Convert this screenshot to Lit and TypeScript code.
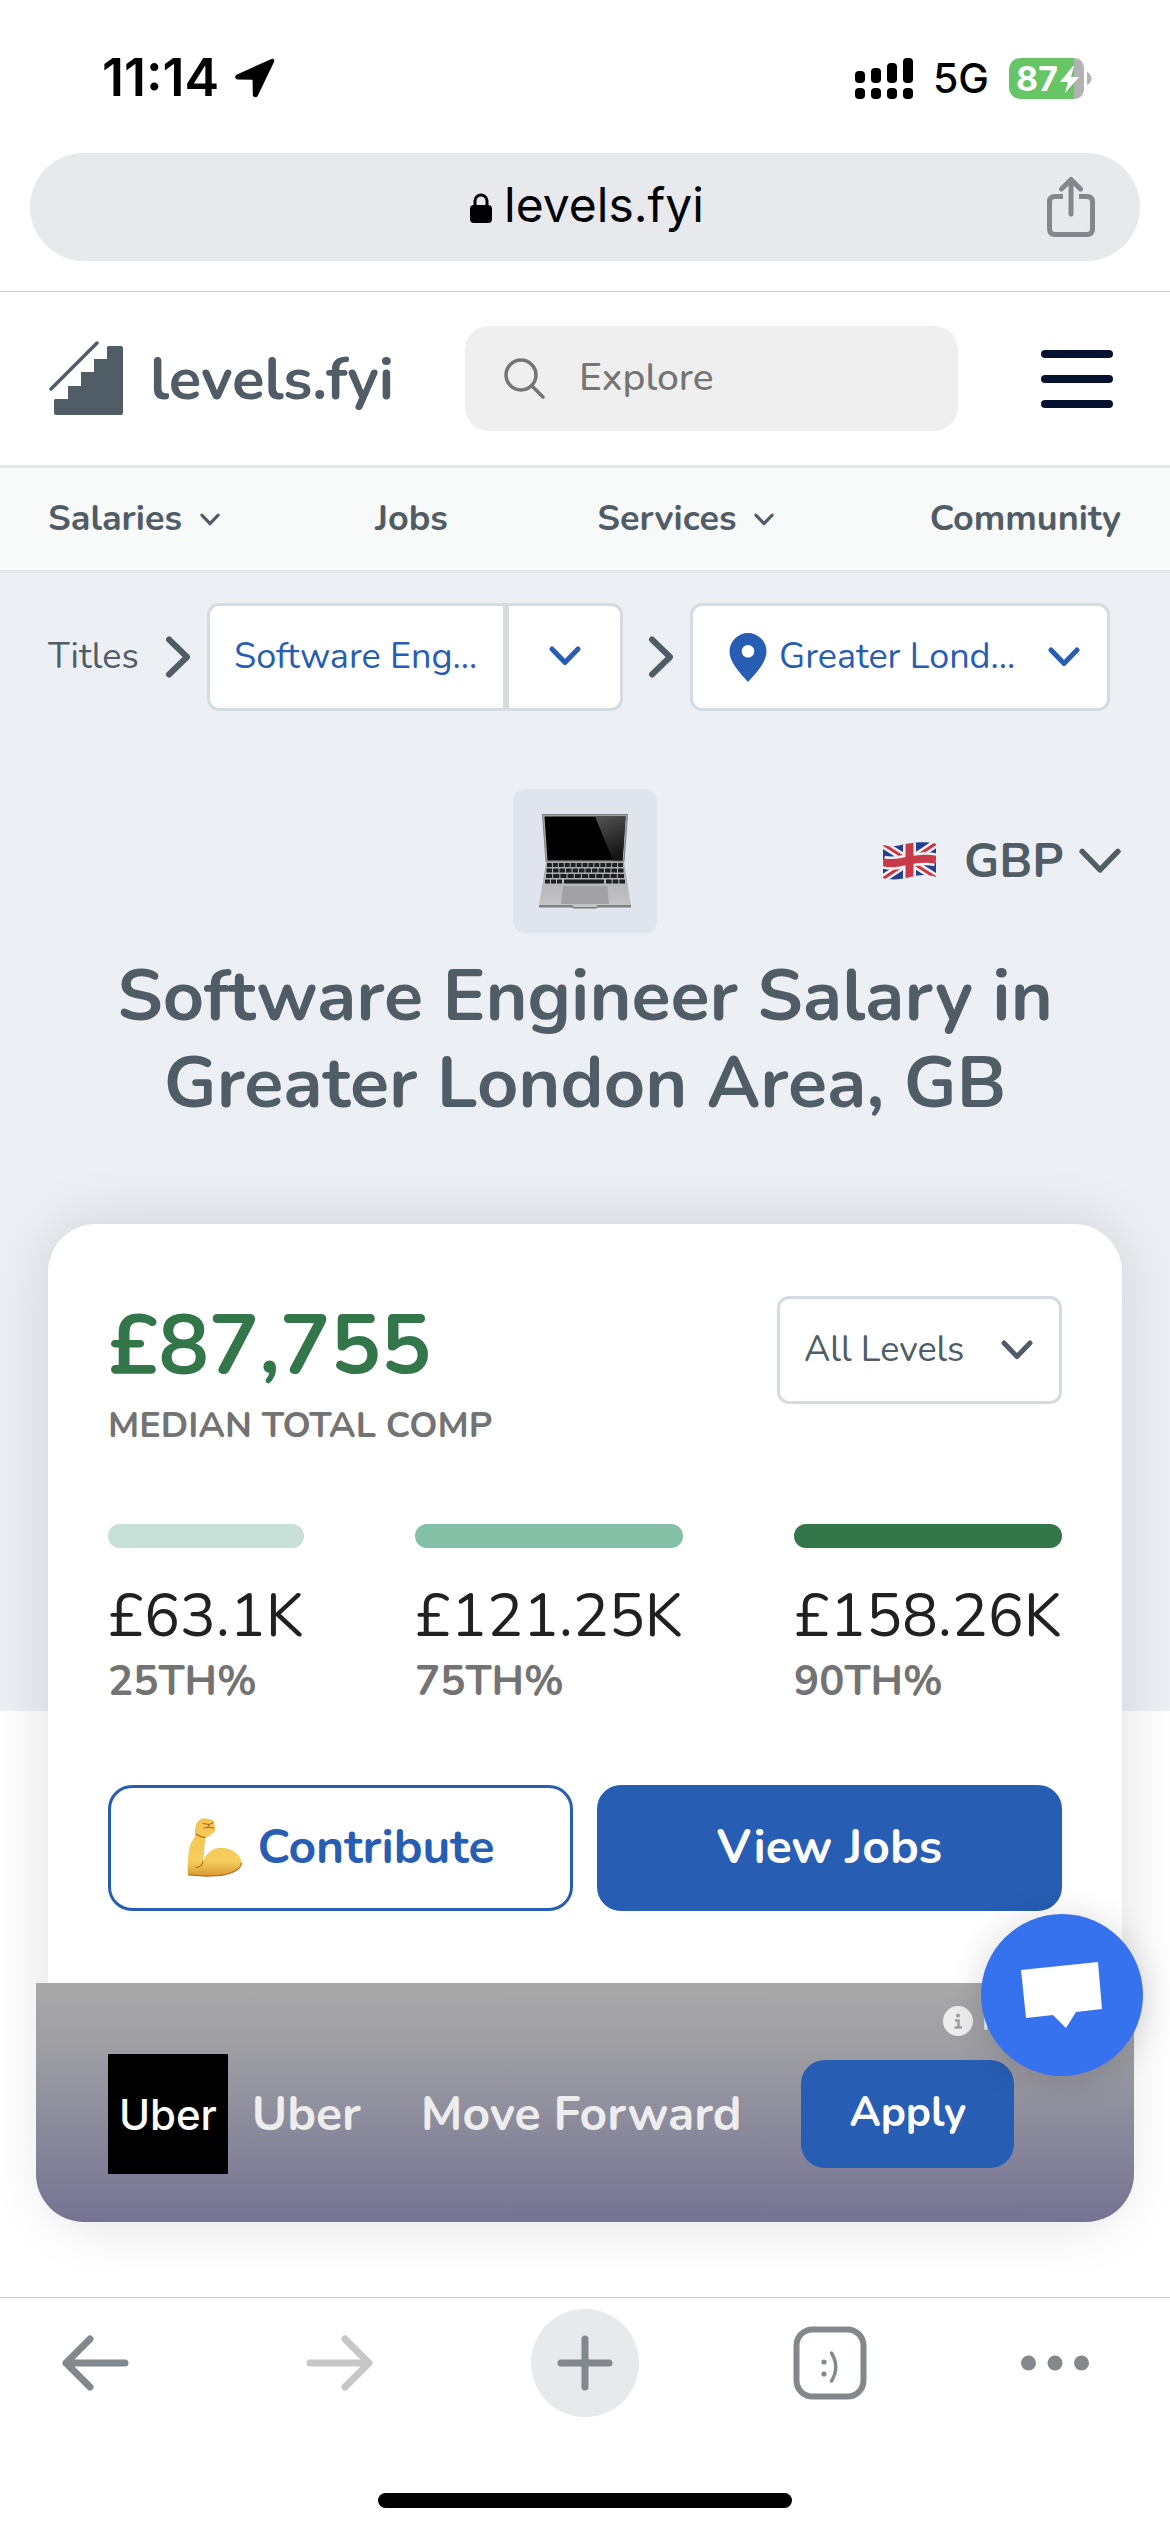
import { LitElement, html, css, svg } from "lit";
import { customElement } from "lit/decorators.js";

const chevronDown = (width: number, height: number, stroke: number) => svg`
  <svg class="chevron" width=${width} height=${height} viewBox="0 0 32 20" fill="none" stroke="currentColor"
    stroke-width=${stroke} stroke-linecap="round" stroke-linejoin="round" aria-hidden="true">
    <path d="M3 3 16 16.500 29 3" />
  </svg>`;

const chevronRight = svg`
  <svg width="26" height="42" viewBox="0 0 26 42" fill="none" stroke="currentColor" stroke-width="6"
    stroke-linecap="round" stroke-linejoin="round" aria-hidden="true">
    <path d="M4 3.500 22 21 4 38.500" />
  </svg>`;

/* ---------- Phone status bar ---------- */
@customElement("status-bar")
export class StatusBar extends LitElement {
  static styles = css`
    :host {
      display: flex;
      justify-content: space-between;
      align-items: center;
      height: 76px;
      padding: 40px 78px 37px 102px;
      font-family: Inter, "Liberation Sans", sans-serif;
      color: #000;
    }
    .side {
      display: flex;
      align-items: center;
      gap: 16px;
    }
    .right {
      gap: 20px;
    }
    .time {
      font-size: 52px;
      line-height: 60px;
      font-weight: 600;
    }
    .network {
      font-size: 41px;
      line-height: 60px;
      font-weight: 500;
    }
    .battery {
      font: 700 34px Inter, "Liberation Sans", sans-serif;
    }
    svg {
      display: block;
    }
  `;
  render() {
    return html`
      <div class="side">
        <span class="time">11:14</span>
        <svg width="40" height="40" viewBox="0 0 40 40" aria-label="Location in use">
          <path d="M36.500 1 2 16.500C-.8 17.800-.2 21.500 3 21.500L17.500 21.800 17.800 36.500C17.900 39.800 21.600 40.300 22.900 37.400L39 4C40 1.800 38.400.1 36.500 1Z" />
        </svg>
      </div>
      <div class="side right">
        <svg width="58" height="41" viewBox="0 0 58 41" aria-label="Signal strength">
          <rect x="0" y="13" width="10" height="12" rx="4" />
          <rect x="16" y="10" width="10" height="15" rx="4" />
          <rect x="32" y="5" width="10" height="20" rx="4" />
          <rect x="48" y="0" width="10" height="25" rx="4" />
          <rect x="0" y="30" width="10" height="11" rx="4" />
          <rect x="16" y="30" width="10" height="11" rx="4" />
          <rect x="32" y="30" width="10" height="11" rx="4" />
          <rect x="48" y="30" width="10" height="11" rx="4" />
        </svg>
        <span class="network">5G</span>
        <svg width="83" height="41" viewBox="0 0 83 41" aria-label="Battery charging">
          <path d="M65 0H62V41H65C71 41 75 37 75 30V11C75 4 71 0 65 0Z" fill="#b2b2b2" />
          <path d="M65 0H12C5 0 0 5 0 12V29C0 36 5 41 12 41H65Z" fill="#66c665" />
          <path d="M78 14C84 17 84 24 78 27Z" fill="#b2b2b2" />
          <text class="battery" x="7" y="33" fill="#fff">87</text>
          <path d="M64 8 51 24H59L56 35 70 19H62L65 8Z" fill="#fff" />
        </svg>
      </div>
    `;
  }
}

/* ---------- Browser address bar ---------- */
@customElement("address-bar")
export class AddressBar extends LitElement {
  static styles = css`
    :host {
      display: block;
      padding: 0 30px 30px;
      border-bottom: 1px solid #c9cbcd;
      font-family: Inter, "Liberation Sans", sans-serif;
    }
    .pill {
      display: grid;
      grid-template-columns: 1fr auto 1fr;
      align-items: center;
      height: 108px;
      padding: 0 44px;
      border-radius: 54px;
      background: #e8e9ed;
    }
    button {
      display: flex;
      align-items: center;
      padding: 0;
      border: 0;
      background: none;
      font: inherit;
      cursor: pointer;
    }
    .address {
      grid-column: 2;
      gap: 12px;
      padding: 0 0 4px 4px;
      font-size: 48px;
      line-height: 60px;
      color: #000;
    }
    .address svg {
      margin-top: 6px;
    }
    .share {
      justify-self: end;
      color: #83888c;
    }
  `;
  render() {
    return html`
      <div class="pill">
        <button class="address">
          <svg width="22" height="30" viewBox="0 0 22 30" aria-hidden="true">
            <rect x="0" y="12" width="22" height="18" rx="4" />
            <path d="M5 14V8A6 6 0 0 1 17 8V14" fill="none" stroke="#000" stroke-width="3" />
          </svg>
          <span>levels.fyi</span>
        </button>
        <button class="share" aria-label="Share">
          <svg width="50" height="62" viewBox="0 0 50 62" fill="none" stroke="currentColor" stroke-width="5" aria-hidden="true">
            <path d="M17 20.500H9Q3.500 20.500 3.500 26V52.500Q3.500 58.500 9 58.500H41Q46.500 58.500 46.500 52.500V26Q46.500 20.500 41 20.500H33" />
            <path d="M25 38V4M15.500 13 25 3.500 34.500 13" stroke-linecap="round" stroke-linejoin="round" />
          </svg>
        </button>
      </div>
    `;
  }
}

/* ---------- Site header and navigation ---------- */
@customElement("site-header")
export class SiteHeader extends LitElement {
  static styles = css`
    :host {
      display: block;
      color: #505c66;
    }
    .top {
      display: flex;
      align-items: center;
      height: 105px;
      padding: 34px 57px 34px 49px;
      border-bottom: 3px solid #e3e7ea;
    }
    .brand {
      display: flex;
      align-items: center;
      gap: 26px;
      min-width: 416px;
      font-size: 60px;
      line-height: 80px;
      font-weight: 700;
      color: inherit;
      text-decoration: none;
    }
    .search {
      display: flex;
      align-items: center;
      flex: 1;
      min-width: 0;
      gap: 34px;
      height: 105px;
      margin-right: 83px;
      padding: 0 39px;
      box-sizing: border-box;
      border-radius: 24px;
      background: #efefef;
      color: #757575;
    }
    .search svg {
      flex: none;
    }
    input {
      flex: 1;
      min-width: 0;
      padding: 0 0 2px;
      border: 0;
      outline: 0;
      background: none;
      font: inherit;
      font-size: 39px;
      line-height: 48px;
      font-weight: 500;
      color: #757575;
    }
    input::placeholder {
      color: #757575;
      opacity: 1;
    }
    .menu {
      display: grid;
      gap: 17px;
      width: 72px;
      padding: 0;
      border: 0;
      background: none;
      cursor: pointer;
    }
    .line {
      height: 8px;
      border-radius: 4px;
      background: #07122e;
    }
    nav {
      display: flex;
      justify-content: space-between;
      align-items: center;
      height: 102px;
      padding: 0 49px 0 48px;
      border-bottom: 3px solid #e3e7ea;
      background: #f8faf9;
      font-size: 36px;
      line-height: 48px;
      font-weight: 700;
    }
    nav a {
      display: flex;
      align-items: center;
      gap: 18px;
      color: inherit;
      text-decoration: none;
    }
    .has-menu {
      padding-right: 6px;
    }
  `;
  render() {
    return html`
      <div class="top">
        <a class="brand" href="#">
          <svg width="75" height="75" viewBox="0 0 75 75" aria-hidden="true">
            <path d="M6 58H19V45H32V31H45V18H58V6Q58 5 60 5H72Q74 5 74 7V72Q74 74 72 74H7Q5 74 5 72V59Z" fill="#505c66" />
            <path d="M2 48 48 2" stroke="#505c66" stroke-width="3.500" stroke-linecap="round" />
          </svg>
          <span>levels.fyi</span>
        </a>
        <label class="search">
          <svg width="41" height="41" viewBox="0 0 41 41" fill="none" stroke="currentColor" stroke-width="3.500"
            stroke-linecap="round" aria-hidden="true">
            <circle cx="17" cy="17" r="15" />
            <path d="M28 28 39 39" />
          </svg>
          <input type="text" placeholder="Explore" aria-label="Explore" />
        </label>
        <button class="menu" aria-label="Menu">
          <span class="line"></span><span class="line"></span><span class="line"></span>
        </button>
      </div>
      <nav>
        <a class="has-menu" href="#">Salaries ${chevronDown(20, 13, 5)}</a>
        <a href="#">Jobs</a>
        <a class="has-menu" href="#">Services ${chevronDown(20, 13, 5)}</a>
        <a href="#">Community</a>
      </nav>
    `;
  }
}

/* ---------- Breadcrumbs and page title ---------- */
@customElement("page-hero")
export class PageHero extends LitElement {
  static styles = css`
    :host {
      display: block;
      padding: 30px 48px 584px;
      background: #ecf0f5;
      color: #505c66;
    }
    .crumbs {
      display: flex;
      align-items: center;
      font-size: 36px;
      line-height: 48px;
    }
    .crumbs svg {
      flex: none;
    }
    .crumbs a {
      color: inherit;
      text-decoration: none;
    }
    .titles {
      width: 92px;
      margin-right: 25px;
    }
    .box {
      display: flex;
      align-items: center;
      box-sizing: border-box;
      height: 108px;
      border: 3px solid #d5dce1;
      border-radius: 12px;
      background: #fff;
      color: #275eb3;
    }
    .job {
      flex: 1 1 416px;
      min-width: 0;
      margin: 0 25px 0 16px;
    }
    .job a {
      flex: 1;
      padding-left: 24px;
      white-space: nowrap;
    }
    .job button {
      align-self: stretch;
      width: 117px;
      padding: 0;
      border: 0;
      border-left: 6px solid #d5dce1;
      background: none;
      color: inherit;
      cursor: pointer;
    }
    .place {
      flex: 1 1 420px;
      min-width: 0;
      gap: 12px;
      margin: 0 12px 0 16px;
      padding: 0 27px 0 36px;
    }
    select {
      flex: 1;
      min-width: 0;
      padding: 0;
      border: 0;
      outline: 0;
      appearance: none;
      background: none;
      font: inherit;
      color: inherit;
      cursor: pointer;
    }
    .row {
      display: grid;
      grid-template-columns: 1fr auto 1fr;
      align-items: center;
      margin-top: 78px;
    }
    .tile {
      grid-column: 2;
      display: grid;
      place-items: center;
      width: 144px;
      height: 144px;
      border-radius: 12px;
      background: #e0e5ed;
    }
    .currency {
      display: flex;
      align-items: center;
      justify-self: end;
      font-size: 48px;
      line-height: 60px;
      font-weight: 700;
    }
    .currency select {
      flex: none;
      margin: 0 14px 0 28px;
    }
    h1 {
      margin: 20px 0 0;
      font-size: 72px;
      line-height: 87px;
      font-weight: 700;
      text-align: center;
    }
  `;
  render() {
    const keyRow = (y: number, x0: number, x1: number, count: number) => {
      const step = (x1 - x0) / count;
      return Array.from(
        { length: count },
        (_, i) => svg`<rect x=${x0 + i * step} y=${y} width=${step - 1} height="4" rx=".6" fill="#1d1f21" />`,
      );
    };
    return html`
      <div class="crumbs">
        <a class="titles" href="#">Titles</a>
        ${chevronRight}
        <div class="box job">
          <a href="#">Software Eng...</a>
          <button aria-label="Choose a title">${chevronDown(32, 20, 5)}</button>
        </div>
        ${chevronRight}
        <label class="box place">
          <svg width="38" height="49" viewBox="0 0 38 49" aria-hidden="true">
            <path d="M19 0A18.500 18.500 0 0 0 .5 18.500C.5 30 12 41 19 49 26 41 37.500 30 37.500 18.500A18.500 18.500 0 0 0 19 0ZM19 12A6.300 6.300 0 1 1 19 24.600 6.300 6.300 0 0 1 19 12Z" fill="#275eb3" />
          </svg>
          <select aria-label="Location">
            <option>Greater Lond...</option>
          </select>
          ${chevronDown(32, 20, 5)}
        </label>
      </div>
      <div class="row">
        <div class="tile">
          <svg width="94" height="96" viewBox="0 0 94 96" aria-label="Laptop">
            <defs>
              <linearGradient id="shine" x1="0" y1="0" x2=".3" y2="1">
                <stop offset="0" stop-color="#545454" />
                <stop offset="1" stop-color="#151515" />
              </linearGradient>
              <linearGradient id="deck" x1="0" y1="0" x2="0" y2="1">
                <stop offset="0" stop-color="#a9a9ab" />
                <stop offset="1" stop-color="#c6c6c8" />
              </linearGradient>
            </defs>
            <path d="M4.500 1.500H89.500L86 49H8Z" fill="#a5a6a7" stroke="#7f8081" stroke-width="1" />
            <path d="M6.500 3.500H87.500L84.500 47.500H9.500Z" fill="#000" />
            <path d="M57 3.500H87.500L84.500 47.500H75Z" fill="url(#shine)" />
            <path d="M8 49H86L93 92V94H60L58 95.500H36L34 94H1V92Z" fill="url(#deck)" />
            <path d="M1 92H34L36 94H58L60 92H93V94.500H60L58 95.500H36L34 94.500H1Z" fill="#808082" />
            ${keyRow(50, 9, 86, 13)} ${keyRow(55.5, 8.5, 86.5, 12)} ${keyRow(61, 8, 87, 11)} ${keyRow(66.5, 7, 25, 3)}
            ${keyRow(66.5, 26, 67, 1)} ${keyRow(66.5, 68, 88, 3)}
            <path d="M25 73H69.500L71 91H23Z" fill="#a2a2a4" />
          </svg>
        </div>
        <label class="currency">
          <svg width="53" height="38" viewBox="0 0 53 38" aria-label="United Kingdom">
            <defs>
              <clipPath id="wave">
                <path d="M0 3C9 6 17 3 26 1.500 36 0 45-.5 53 2V35C45 32 36 33 27 35 18 37.500 8 38.500 0 36Z" />
              </clipPath>
            </defs>
            <g clip-path="url(#wave)">
              <rect width="53" height="38" fill="#24418f" />
              <path d="M-2 1 55 37M-2 38 55 0" stroke="#f3f3f5" stroke-width="8" />
              <path d="M-2 1 55 37M-2 38 55 0" stroke="#cf3340" stroke-width="3" />
              <path d="M26.500 0V38M0 20C9 23 17 20 26 18.500 36 17 45 15.500 53 18" stroke="#f3f3f5" stroke-width="13" fill="none" />
              <path d="M26.500 0V38M0 20C9 23 17 20 26 18.500 36 17 45 15.500 53 18" stroke="#c93a48" stroke-width="8" fill="none" />
            </g>
          </svg>
          <select aria-label="Currency">
            <option>GBP</option>
          </select>
          ${chevronDown(44, 28, 4)}
        </label>
      </div>
      <h1>Software Engineer Salary in Greater London Area, GB</h1>
    `;
  }
}

/* ---------- Salary summary card ---------- */
@customElement("salary-card")
export class SalaryCard extends LitElement {
  static styles = css`
    :host {
      display: block;
      position: relative;
      margin: -487px 48px 87px;
      padding: 72px 60px 0;
      border-radius: 48px;
      background: #fff;
      box-shadow: 0 0 60px rgba(0, 0, 0, 0.13);
    }
    .summary {
      display: flex;
      justify-content: space-between;
      align-items: flex-start;
    }
    .amount {
      font-size: 84px;
      line-height: 100px;
      font-weight: 700;
      color: #327649;
    }
    .caption {
      margin-top: 6px;
      font-size: 36px;
      line-height: 48px;
      font-weight: 700;
      color: #737373;
    }
    .levels {
      display: flex;
      align-items: center;
      box-sizing: border-box;
      width: 285px;
      height: 108px;
      padding: 0 26px 0 24px;
      border: 3px solid #d5dce1;
      border-radius: 12px;
      color: #505c66;
    }
    select {
      flex: 1;
      min-width: 0;
      padding: 0;
      border: 0;
      outline: 0;
      appearance: none;
      background: none;
      font: inherit;
      font-size: 36px;
      line-height: 48px;
      color: inherit;
      cursor: pointer;
    }
    .levels svg {
      flex: none;
    }
    .percentiles {
      display: grid;
      grid-template-columns: 196fr 268fr 268fr;
      gap: 111px;
      margin-top: 74px;
    }
    .bar {
      height: 24px;
      border-radius: 12px;
    }
    .low {
      background: #c7e1d9;
    }
    .mid {
      background: #83c0a6;
    }
    .high {
      background: #327649;
    }
    .value {
      margin-top: 32px;
      font-size: 60px;
      line-height: 72px;
      color: #212121;
      white-space: nowrap;
    }
    .rank {
      margin-top: 3px;
      font-size: 42px;
      line-height: 54px;
      font-weight: 700;
      color: #737373;
    }
    .actions {
      display: grid;
      grid-template-columns: 1fr 1fr;
      gap: 24px;
      margin-top: 76px;
    }
    .button {
      display: flex;
      align-items: center;
      justify-content: center;
      gap: 16px;
      box-sizing: border-box;
      height: 126px;
      padding: 0 0 2px;
      border: 3px solid #275eb3;
      border-radius: 24px;
      background: #275eb3;
      font: inherit;
      font-size: 48px;
      line-height: 60px;
      font-weight: 700;
      color: #fff;
      cursor: pointer;
    }
    .outline {
      background: #fff;
      color: #275eb3;
    }
    .ad {
      margin: 72px -72px -12px;
      padding: 20px 72px 48px;
      border-radius: 0 0 48px 48px;
      background: linear-gradient(#a9a9a9, #9f9fa4 25%, #757392);
      color: #ededed;
    }
    .promoted {
      display: flex;
      align-items: center;
      justify-content: flex-end;
      gap: 9px;
      margin: 0 -54px 15px;
      font-size: 30px;
      line-height: 36px;
      font-weight: 600;
    }
    .offer {
      display: flex;
      align-items: center;
      font-size: 48px;
      line-height: 60px;
      font-weight: 700;
    }
    .logo {
      display: grid;
      place-items: center;
      width: 120px;
      height: 120px;
      margin-right: 24px;
      background: #000;
      font: 500 42px Inter, "Liberation Sans", sans-serif;
      color: #fff;
    }
    .pitch {
      flex: 1;
      padding: 0 60px;
      white-space: nowrap;
    }
    .apply {
      width: 213px;
      height: 108px;
      margin-right: 48px;
      font-size: 42px;
    }
  `;
  render() {
    const percentiles = [
      { tone: "low", value: "£63.1K", rank: "25TH%" },
      { tone: "mid", value: "£121.25K", rank: "75TH%" },
      { tone: "high", value: "£158.26K", rank: "90TH%" },
    ];
    return html`
      <div class="summary">
        <div>
          <div class="amount">£87,755</div>
          <div class="caption">MEDIAN TOTAL COMP</div>
        </div>
        <label class="levels">
          <select aria-label="Level">
            <option>All Levels</option>
          </select>
          ${chevronDown(32, 20, 5)}
        </label>
      </div>
      <div class="percentiles">
        ${percentiles.map(
          (p) => html`<div>
            <div class="bar ${p.tone}"></div>
            <div class="value">${p.value}</div>
            <div class="rank">${p.rank}</div>
          </div>`,
        )}
      </div>
      <div class="actions">
        <button class="button outline">
          <svg width="55" height="59" viewBox="0 0 55 59" aria-hidden="true">
            <defs>
              <linearGradient id="skin" x1="0" y1="0" x2="0" y2="1">
                <stop offset="0" stop-color="#f5c451" />
                <stop offset=".75" stop-color="#f6cd5d" />
                <stop offset="1" stop-color="#d9992f" />
              </linearGradient>
            </defs>
            <path d="M15 .5C19 .2 26 .8 27.500 4 26.500 5 28.500 8 28 9.500 29 12 27 15 25 15.500 23 18.500 20 19 18.500 19.500 17 28 17.500 35 16 43.500 20 33 28 29.500 35 29.800 45 30 54.500 37 54.500 45 54 53 40 58 24 58 15 58.500 8 57 1.500 57 .2 55 .8 51 .8 48 1 39 1.500 31 4 25 6.500 21 8 19 8.200 16 7.500 11 8.500 3 15 .5Z" fill="url(#skin)" />
            <path d="M9 16C12 17.500 14 20 18.500 19.500M16 43.500C15.500 47 13 49 9 49.500M1.500 57C8 57 15 58.500 24 58 40 58 54 53 54.500 45M16 5.500 22 6.500 26 5M17 10 21 9 26.500 10M22 6.500 21 9" fill="none" stroke="#a8671c" stroke-width="1.100" stroke-linecap="round" />
          </svg>
          <span>Contribute</span>
        </button>
        <button class="button">View Jobs</button>
      </div>
      <div class="ad">
        <div class="promoted">
          <svg width="30" height="30" viewBox="0 0 30 30" aria-hidden="true">
            <circle cx="15" cy="15" r="15" fill="#ededed" />
            <circle cx="15" cy="9.500" r="2" fill="#9fa0a2" />
            <path d="M12 14.500H15.500V21.500M11.500 21.500H19" fill="none" stroke="#9fa0a2" stroke-width="2.600" />
          </svg>
          <span>Promoted</span>
        </div>
        <div class="offer">
          <div class="logo">Uber</div>
          <span>Uber</span>
          <span class="pitch">Move Forward</span>
          <button class="button apply">Apply</button>
        </div>
      </div>
    `;
  }
}

/* ---------- Browser toolbar ---------- */
@customElement("browser-toolbar")
export class BrowserToolbar extends LitElement {
  static styles = css`
    :host {
      display: block;
      padding: 11px 41px 24px;
      border-top: 1px solid #c9cbcd;
      background: #fff;
      color: #83888c;
    }
    .buttons {
      display: flex;
      justify-content: space-between;
      margin-bottom: 76px;
    }
    button {
      display: flex;
      align-items: center;
      justify-content: center;
      width: 108px;
      height: 108px;
      padding: 0;
      border: 0;
      border-radius: 54px;
      background: none;
      color: inherit;
      cursor: pointer;
    }
    .forward {
      color: #c7c7c7;
    }
    .new {
      background: #e8e9ed;
    }
    .more {
      justify-content: flex-start;
    }
    .home {
      width: 38%;
      height: 15px;
      margin: 0 auto;
      border-radius: 8px;
      background: #000;
    }
  `;
  render() {
    return html`
      <div class="buttons">
        <button aria-label="Back">
          <svg width="68" height="56" viewBox="0 0 68 56" fill="none" stroke="currentColor" stroke-width="7"
            stroke-linecap="round" stroke-linejoin="round" aria-hidden="true">
            <path d="M64 28H5M29 4 5 28 29 52" />
          </svg>
        </button>
        <button class="forward" aria-label="Forward">
          <svg width="68" height="56" viewBox="0 0 68 56" fill="none" stroke="currentColor" stroke-width="7"
            stroke-linecap="round" stroke-linejoin="round" aria-hidden="true">
            <path d="M4 28H63M39 4 63 28 39 52" />
          </svg>
        </button>
        <button class="new" aria-label="New tab">
          <svg width="56" height="56" viewBox="0 0 56 56" stroke="currentColor" stroke-width="7" stroke-linecap="round" aria-hidden="true">
            <path d="M28 4V52M4 28H52" />
          </svg>
        </button>
        <button aria-label="Tabs">
          <svg width="74" height="74" viewBox="0 0 74 74" fill="none" stroke="currentColor" aria-hidden="true">
            <rect x="3.500" y="3.500" width="67" height="67" rx="16" stroke-width="6" />
            <circle cx="31" cy="36" r="2.600" fill="currentColor" stroke="none" />
            <circle cx="31" cy="48" r="2.600" fill="currentColor" stroke="none" />
            <path d="M38.500 27Q47 41 38.500 55" stroke-width="3.400" stroke-linecap="round" />
          </svg>
        </button>
        <button class="more" aria-label="More">
          <svg width="68" height="16" viewBox="0 0 68 16" fill="currentColor" aria-hidden="true">
            <circle cx="7.500" cy="8" r="7.500" />
            <circle cx="34" cy="8" r="7.500" />
            <circle cx="60.500" cy="8" r="7.500" />
          </svg>
        </button>
      </div>
      <div class="home"></div>
    `;
  }
}

@customElement("app-root")
export class AppRoot extends LitElement {
  static styles = css`
    :host {
      display: flex;
      flex-direction: column;
      min-height: 100vh;
      background: #fff;
      font-family: Nunito, Lato, "Open Sans", sans-serif;
    }
    main {
      position: relative;
      flex: 1;
    }
    .chat {
      position: absolute;
      right: 27px;
      bottom: 221px;
      display: grid;
      place-items: center;
      width: 162px;
      height: 162px;
      padding: 0;
      border: 0;
      border-radius: 50%;
      background: #3772ee;
      box-shadow: 0 4px 36px rgba(0, 0, 0, 0.16);
      cursor: pointer;
    }
  `;
  render() {
    return html`
      <status-bar></status-bar>
      <address-bar></address-bar>
      <site-header></site-header>
      <main>
        <page-hero></page-hero>
        <salary-card></salary-card>
        <button class="chat" aria-label="Open chat">
          <svg width="82" height="68" viewBox="0 0 82 68" aria-hidden="true">
            <path d="M0 9 77 1 81 48 55 51 45 67 32 54 5 57Z" fill="#fff" />
          </svg>
        </button>
      </main>
      <browser-toolbar></browser-toolbar>
    `;
  }
}
